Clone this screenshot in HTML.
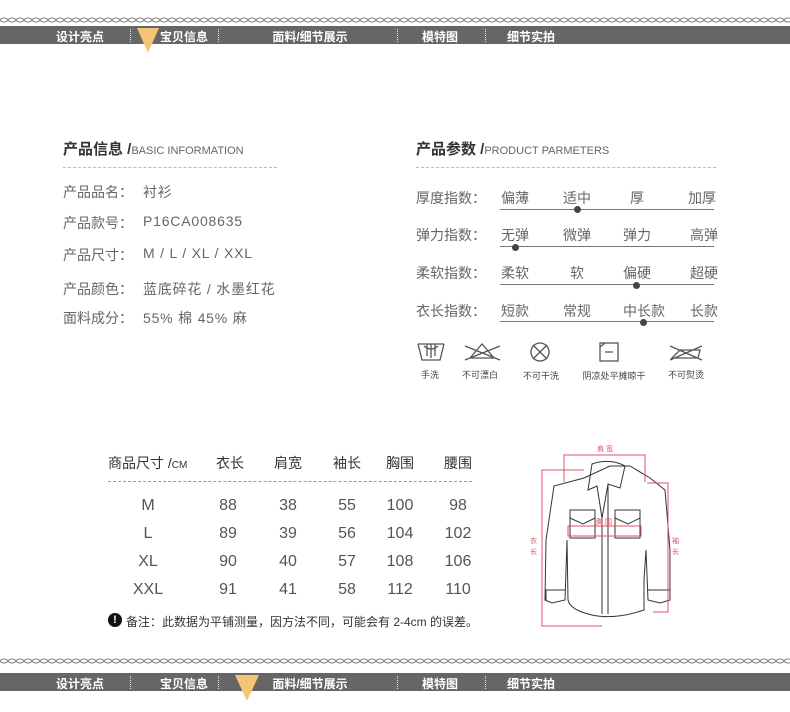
<!DOCTYPE html>
<html><head><meta charset="utf-8"><style>
*{margin:0;padding:0;box-sizing:border-box}
body{width:790px;height:712px;background:#fff;position:relative;overflow:hidden;font-family:"Liberation Sans","Noto Sans CJK SC",sans-serif;color:#555}
.a{position:absolute;white-space:nowrap}
.bar{position:absolute;left:0;width:790px;height:18px;background:#666}
.nav{position:absolute;color:#fff;font-size:12px;font-weight:600;top:2px;transform:translateX(-50%)}
.dv{position:absolute;top:3px;height:13px;border-left:1px dotted #eee}
.t{font-size:15px;font-weight:bold;color:#333}
.t span{font-size:11px;font-weight:normal;color:#666}
.dash{position:absolute;height:0;border-top:1px dashed #bbb}
.r{font-size:14px;color:#666}
.v{font-size:14px;color:#666;letter-spacing:0.8px}
.ln{position:absolute;height:1px;background:#777}
.dot{position:absolute;width:7px;height:7px;border-radius:50%;background:#444}
.c{transform:translateX(-50%);text-align:center}
.sm{font-size:9px;color:#444}
</style></head><body>
<svg class="a" style="left:0;top:16px" width="790" height="8"><defs><pattern id="ch" width="8" height="8" patternUnits="userSpaceOnUse"><ellipse cx="4" cy="4" rx="3.6" ry="2" fill="none" stroke="#888" stroke-width="1.1"/></pattern></defs><rect width="790" height="8" fill="url(#ch)"/></svg>
<div class="bar" style="top:26px"></div>
<svg class="a" style="left:0;top:657px" width="790" height="8"><rect width="790" height="8" fill="url(#ch)"/></svg>
<div class="bar" style="top:673px"></div>
<div class="a" style="top:26px;left:0;width:790px;height:18px">
<div class="nav" style="left:80px">设计亮点</div><div class="dv" style="left:130px"></div>
<div class="nav" style="left:184px">宝贝信息</div><div class="dv" style="left:218px"></div>
<div class="nav" style="left:310px">面料/细节展示</div><div class="dv" style="left:397px"></div>
<div class="nav" style="left:440px">模特图</div><div class="dv" style="left:485px"></div>
<div class="nav" style="left:531px">细节实拍</div>
</div>
<svg class="a" style="left:137px;top:28px" width="22" height="26"><polygon points="0,0 22,0 11,25" fill="#f4c574"/></svg>
<div class="a" style="top:673px;left:0;width:790px;height:18px">
<div class="nav" style="left:80px">设计亮点</div><div class="dv" style="left:130px"></div>
<div class="nav" style="left:184px">宝贝信息</div><div class="dv" style="left:218px"></div>
<div class="nav" style="left:310px">面料/细节展示</div><div class="dv" style="left:397px"></div>
<div class="nav" style="left:440px">模特图</div><div class="dv" style="left:485px"></div>
<div class="nav" style="left:531px">细节实拍</div>
</div>
<svg class="a" style="left:235px;top:675px" width="24" height="27"><polygon points="0,0 24,0 12,26" fill="#f4c574"/></svg>

<div class="a t" style="left:63px;top:138px">产品信息 /<span>BASIC INFORMATION</span></div>
<div class="dash" style="left:63px;top:167px;width:214px"></div>
<div class="a r" style="left:63px;top:182px">产品品名：</div><div class="a v" style="left:143px;top:182px">衬衫</div>
<div class="a r" style="left:63px;top:213px">产品款号：</div><div class="a v" style="left:143px;top:213px">P16CA008635</div>
<div class="a r" style="left:63px;top:245px">产品尺寸：</div><div class="a v" style="left:143px;top:245px">M / L / XL / XXL</div>
<div class="a r" style="left:63px;top:279px">产品颜色：</div><div class="a v" style="left:143px;top:279px">蓝底碎花 / 水墨红花</div>
<div class="a r" style="left:63px;top:308px">面料成分：</div><div class="a v" style="left:143px;top:308px">55% 棉 45% 麻</div>

<div class="a t" style="left:416px;top:138px">产品参数 /<span>PRODUCT PARMETERS</span></div>
<div class="dash" style="left:416px;top:167px;width:300px"></div>
<div class="a r" style="left:416px;top:188px">厚度指数：</div>
<div class="a r c" style="left:515px;top:188px">偏薄</div><div class="a r c" style="left:577px;top:188px">适中</div><div class="a r c" style="left:637px;top:188px">厚</div><div class="a r c" style="left:702px;top:188px">加厚</div>
<div class="ln" style="left:500px;top:209px;width:214px"></div><div class="dot" style="left:574px;top:206px"></div>
<div class="a r" style="left:416px;top:225px">弹力指数：</div>
<div class="a r c" style="left:515px;top:225px">无弹</div><div class="a r c" style="left:577px;top:225px">微弹</div><div class="a r c" style="left:637px;top:225px">弹力</div><div class="a r c" style="left:704px;top:225px">高弹</div>
<div class="ln" style="left:500px;top:246px;width:214px"></div><div class="dot" style="left:512px;top:244px"></div>
<div class="a r" style="left:416px;top:263px">柔软指数：</div>
<div class="a r c" style="left:515px;top:263px">柔软</div><div class="a r c" style="left:577px;top:263px">软</div><div class="a r c" style="left:637px;top:263px">偏硬</div><div class="a r c" style="left:704px;top:263px">超硬</div>
<div class="ln" style="left:500px;top:284px;width:214px"></div><div class="dot" style="left:633px;top:282px"></div>
<div class="a r" style="left:416px;top:301px">衣长指数：</div>
<div class="a r c" style="left:515px;top:301px">短款</div><div class="a r c" style="left:577px;top:301px">常规</div><div class="a r c" style="left:644px;top:301px">中长款</div><div class="a r c" style="left:704px;top:301px">长款</div>
<div class="ln" style="left:500px;top:321px;width:214px"></div><div class="dot" style="left:640px;top:319px"></div>

<svg class="a" style="left:410px;top:338px" width="310" height="30" fill="none" stroke="#555" stroke-width="1.3">
<path d="M8 6 L12 22 H30 L34 6 M8 6 H34"/><path d="M17 6 V18 M21 6 V20 M25 6 V18 M14 8 Q21 14 28 8"/>
<path d="M60 20 L72 6 L84 20 Z M55 8 L90 22 M90 8 L55 22"/>
<circle cx="130" cy="14" r="9"/><path d="M123 7 L137 21 M137 7 L123 21"/>
<rect x="190" y="5" width="18" height="18"/><path d="M190 9 L195 5 M195 14 H203"/>
<path d="M262 20 L270 12 H290 L288 20 Z M260 8 L292 22 M292 8 L260 22"/>
</svg>
<div class="a sm c" style="left:430px;top:368px">手洗</div>
<div class="a sm c" style="left:480px;top:368px">不可漂白</div>
<div class="a sm c" style="left:541px;top:369px">不可干洗</div>
<div class="a sm c" style="left:614px;top:369px">阴凉处平摊晾干</div>
<div class="a sm c" style="left:686px;top:368px">不可熨烫</div>

<div class="a" style="left:108px;top:453px;font-size:14px;color:#333">商品尺寸 /<span style="font-size:10px">CM</span></div>
<div class="a c" style="left:230px;top:453px;font-size:14px;color:#333">衣长</div>
<div class="a c" style="left:288px;top:453px;font-size:14px;color:#333">肩宽</div>
<div class="a c" style="left:347px;top:453px;font-size:14px;color:#333">袖长</div>
<div class="a c" style="left:400px;top:453px;font-size:14px;color:#333">胸围</div>
<div class="a c" style="left:458px;top:453px;font-size:14px;color:#333">腰围</div>
<div class="dash" style="left:108px;top:481px;width:364px;border-color:#999"></div>
<div style="position:absolute;left:0;top:497px;font-size:16px;color:#555">
<div class="a c" style="left:148px;top:0">M</div><div class="a c" style="left:228px;top:0">88</div><div class="a c" style="left:288px;top:0">38</div><div class="a c" style="left:347px;top:0">55</div><div class="a c" style="left:400px;top:0">100</div><div class="a c" style="left:458px;top:0">98</div>
<div class="a c" style="left:148px;top:28px">L</div><div class="a c" style="left:228px;top:28px">89</div><div class="a c" style="left:288px;top:28px">39</div><div class="a c" style="left:347px;top:28px">56</div><div class="a c" style="left:400px;top:28px">104</div><div class="a c" style="left:458px;top:28px">102</div>
<div class="a c" style="left:148px;top:56px">XL</div><div class="a c" style="left:228px;top:56px">90</div><div class="a c" style="left:288px;top:56px">40</div><div class="a c" style="left:347px;top:56px">57</div><div class="a c" style="left:400px;top:56px">108</div><div class="a c" style="left:458px;top:56px">106</div>
<div class="a c" style="left:148px;top:84px">XXL</div><div class="a c" style="left:228px;top:84px">91</div><div class="a c" style="left:288px;top:84px">41</div><div class="a c" style="left:347px;top:84px">58</div><div class="a c" style="left:400px;top:84px">112</div><div class="a c" style="left:458px;top:84px">110</div>
</div>
<div class="a" style="left:108px;top:613px;width:14px;height:14px;border-radius:50%;background:#111;color:#fff;font-size:11px;font-weight:bold;text-align:center;line-height:14px">!</div>
<div class="a" style="left:126px;top:613px;font-size:12px;color:#333">备注：此数据为平铺测量，因方法不同，可能会有 2-4cm 的误差。</div>

<svg class="a" style="left:520px;top:430px" width="180" height="200" fill="none">
<g stroke="#333" stroke-width="1">
<path d="M64 48 L90 36 L110 36 L130 48 L145 60 L150 120 L150 170 L140 173 L128 170 L126 120 L124 150 L124 180 Q95 190 72 185 Q50 180 48 170 L47 110 L45 170 L32 173 L25 170 L26 110 L34 56 Z"/>
<path d="M72 34 Q90 28 105 36 L100 58 L88 54 L82 88 L77 56 L68 60 Z"/>
<path d="M82 88 V184 M88 54 V184"/>
<rect x="50" y="80" width="25" height="28"/><rect x="95" y="80" width="25" height="28"/>
<path d="M50 88 L63 94 L75 88 M95 88 L108 94 L120 88"/>
<path d="M26 170 L26 160 H45 M128 160 H150"/>
</g>
<g stroke="#e0506a" stroke-width="1">
<path d="M44 52 V25 H125 V52"/>
<path d="M64 40 H22 V196 H82"/>
<path d="M127 53 H148 V182 H133"/>
<rect x="48" y="96" width="73" height="10"/>
</g>
<g fill="#e0506a" font-size="7" font-family="Liberation Sans,Noto Sans CJK SC,sans-serif">
<text x="77" y="21">肩 宽</text><text x="76" y="94">胸 围</text>
<text x="10" y="113">衣</text><text x="10" y="124">长</text>
<text x="152" y="113">袖</text><text x="152" y="124">长</text>
</g>
</svg>
</body></html>
